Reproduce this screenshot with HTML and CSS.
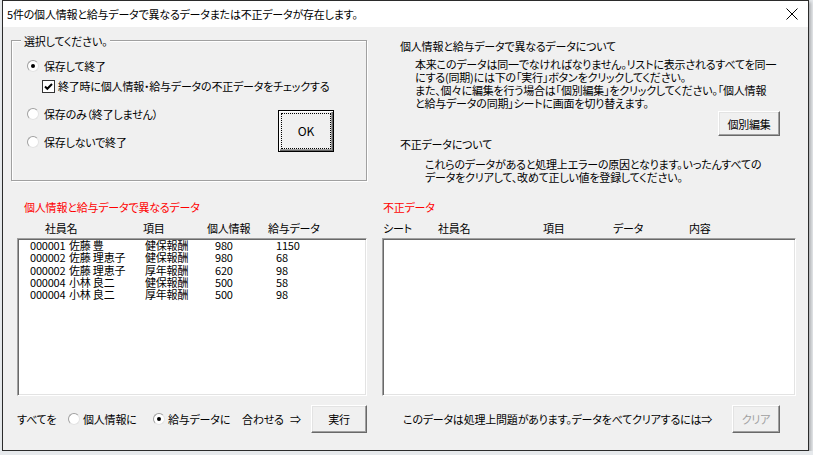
FILE: index.html
```html
<!DOCTYPE html>
<html lang="ja">
<head>
  <meta charset="UTF-8">
  <title>データチェック</title>
  <link rel="stylesheet" href="styles.css">
</head>
<body>

  <div class="window">
    <div class="titlebar">
      <span class="title">5件の個人情報と給与データで異なるデータまたは不正データが存在します。</span>
      <svg class="close" width="12" height="12" viewBox="0 0 12 12">
        <path d="M0.5 0.5 L11.5 11.5 M11.5 0.5 L0.5 11.5" stroke="#000" stroke-width="1" fill="none"/>
      </svg>
    </div>

    <div class="client">
      <div class="top">
        <div class="frame">
          <span class="frame-label">選択してください。</span>
          <div class="frame-body">
            <div class="options">
              <div class="opt"><span class="radio checked"></span>保存して終了</div>
              <div class="opt sub">
                <svg class="check" width="13" height="13" viewBox="0 0 13 13">
                  <rect x="0.5" y="0.5" width="12" height="12" fill="#fff" stroke="#333"/>
                  <path d="M3 6.5 L5.3 8.8 L10 4" stroke="#000" stroke-width="2" fill="none"/>
                </svg>終了時に個人情報・給与データの不正データをチェックする
              </div>
              <div class="opt gap"><span class="radio"></span>保存のみ（終了しません）</div>
              <div class="opt gap"><span class="radio"></span>保存しないで終了</div>
            </div>
            <button class="btn default"><span>OK</span></button>
          </div>
        </div>

        <div class="info">
          <p class="info-head">個人情報と給与データで異なるデータについて</p>
          <p class="info-text">本来このデータは同一でなければなりません。リストに表示されるすべてを同一<br>にする(同期)には下の「実行」ボタンをクリックしてください。<br>また、個々に編集を行う場合は「個別編集」をクリックしてください。「個人情報<br>と給与データの同期」シートに画面を切り替えます。</p>
          <div class="info-actions">
            <button class="btn edit">個別編集</button>
          </div>
          <p class="info-head next">不正データについて</p>
          <p class="info-text deep">これらのデータがあると処理上エラーの原因となります。いったんすべての<br>データをクリアして、改めて正しい値を登録してください。</p>
        </div>
      </div>

      <div class="panes">
        <div class="pane">
          <div class="pane-title left">個人情報と給与データで異なるデータ</div>
          <div class="cols diff-cols">
            <span>社員名</span><span>項目</span><span>個人情報</span><span>給与データ</span>
          </div>
          <div class="listbox">
            <div class="row diff-row"><span>000001</span><span>佐藤 豊</span><span>健保報酬</span><span>980</span><span>1150</span></div>
            <div class="row diff-row"><span>000002</span><span>佐藤 理恵子</span><span>健保報酬</span><span>980</span><span>68</span></div>
            <div class="row diff-row"><span>000002</span><span>佐藤 理恵子</span><span>厚年報酬</span><span>620</span><span>98</span></div>
            <div class="row diff-row"><span>000004</span><span>小林 良二</span><span>健保報酬</span><span>500</span><span>58</span></div>
            <div class="row diff-row"><span>000004</span><span>小林 良二</span><span>厚年報酬</span><span>500</span><span>98</span></div>
          </div>
          <div class="pane-foot sync-foot">
            <span>すべてを</span>
            <span class="choice"><span class="radio"></span>個人情報に</span>
            <span class="choice"><span class="radio checked"></span>給与データに</span>
            <span>合わせる</span>
            <span>⇒</span>
            <button class="btn run">実行</button>
          </div>
        </div>

        <div class="pane">
          <div class="pane-title right">不正データ</div>
          <div class="cols bad-cols">
            <span>シート</span><span>社員名</span><span>項目</span><span>データ</span><span>内容</span>
          </div>
          <div class="listbox"></div>
          <div class="pane-foot clear-foot">
            <span>このデータは処理上問題があります。データをべてクリアするには⇒</span>
            <button class="btn clear" disabled>クリア</button>
          </div>
        </div>
      </div>
    </div>
  </div>

</body>
</html>
```

FILE: styles.css
```css
body {
  margin: 0;
  background: #e6e9ec;
  font-family: "Noto Sans CJK JP", "Noto Sans", sans-serif;
  font-size: 11px;
  letter-spacing: -0.2px;
  font-feature-settings: "palt";
  color: #000;
}

.window {
  box-sizing: border-box;
  width: 807px;
  height: 451px;
  margin-left: 2px;
  border: 1px solid #2b2b2b;
  background: #f0f0f0;
  box-shadow: 2px 2px 3px rgba(0, 0, 0, 0.25);
}

.titlebar {
  height: 26px;
  background: #fff;
  display: flex;
  align-items: center;
  justify-content: space-between;
  padding: 0 10px 0 4px;
  line-height: 14px;
}

.client {
  padding-top: 13px;
}

.top {
  display: flex;
  height: 150px;
}

/* option frame */
.frame {
  position: relative;
  box-sizing: border-box;
  width: 356px;
  height: 141px;
  margin-left: 8px;
  border: 1px solid #a0a0a0;
  box-shadow: inset 1px 1px 0 #fff, 1px 1px 0 #fff;
  flex-shrink: 0;
}

.frame-label {
  position: absolute;
  top: -7px;
  left: 9px;
  padding: 0 3px;
  background: #f0f0f0;
  line-height: 14px;
}

.frame-body {
  display: flex;
  align-items: flex-end;
  padding: 15px 32px 0 15px;
}

.options {
  flex: 1;
  min-width: 0;
}

.opt {
  display: flex;
  align-items: center;
  height: 20px;
  line-height: 14px;
  white-space: nowrap;
}

.opt.sub {
  padding-left: 15px;
}

.opt.gap {
  margin-top: 8px;
}

.radio {
  position: relative;
  box-sizing: border-box;
  width: 12px;
  height: 12px;
  margin-right: 5px;
  border-radius: 50%;
  background: #fff;
  border: 1px solid;
  border-color: #a0a0a0 #e3e3e3 #e3e3e3 #a0a0a0;
  flex-shrink: 0;
}

.radio.checked::after {
  content: "";
  position: absolute;
  left: 3px;
  top: 3px;
  width: 4px;
  height: 4px;
  border-radius: 50%;
  background: #000;
}

.check {
  margin-right: 3px;
  flex-shrink: 0;
}

/* buttons */
.btn {
  box-sizing: border-box;
  font: inherit;
  letter-spacing: inherit;
  font-feature-settings: "palt";
  color: #000;
  background: #f0f0f0;
  border: 1px solid;
  border-color: #fff #696969 #696969 #fff;
  box-shadow: inset -1px -1px 0 #a0a0a0, inset 1px 1px 0 #e3e3e3;
  padding: 0;
  line-height: 14px;
  flex-shrink: 0;
}

.btn.default {
  width: 56px;
  height: 42px;
  margin-left: auto;
  padding: 2px;
  border: 1px solid #000;
  box-shadow: inset 1px 1px 0 #fff, inset -1px -1px 0 #696969, inset -2px -2px 0 #a0a0a0;
  display: flex;
  font-size: 12px;
}

.btn.default span {
  flex: 1;
  display: flex;
  align-items: center;
  justify-content: center;
  border: 1px dotted #000;
}

.btn.edit {
  width: 62px;
  height: 25px;
}

.btn.run {
  width: 56px;
  height: 28px;
}

.btn.clear {
  width: 48px;
  height: 28px;
  color: #a0a0a0;
}

/* info text */
.info {
  margin-left: 33px;
  width: 380px;
}

.info-head {
  margin: 0;
  line-height: 12px;
  white-space: nowrap;
}

.info-head.next {
  margin-top: 2px;
}

.info-text {
  margin: 6px 0 0 15px;
  line-height: 13px;
  white-space: nowrap;
}

.info-text.deep {
  margin: 8px 0 0 25px;
}

.info-actions {
  display: flex;
  justify-content: flex-end;
  margin-top: 1px;
}

/* lists */
.panes {
  display: grid;
  grid-template-columns: 350px 414px;
  column-gap: 15px;
  margin: 10px 0 0 14px;
}

.pane-title {
  color: #ff0000;
  line-height: 14px;
}

.pane-title.left {
  padding-left: 7px;
}

.pane-title.right {
  padding-left: 1px;
}

.cols {
  display: grid;
  margin-top: 7px;
  line-height: 14px;
  white-space: nowrap;
}

.diff-cols {
  grid-template-columns: 98px 64px 61px auto;
  padding-left: 28px;
}

.bad-cols {
  grid-template-columns: 55px 105px 70px 76px auto;
  padding-left: 1px;
}

.listbox {
  box-sizing: border-box;
  height: 158px;
  margin-top: 3px;
  background: #fff;
  border: 1px solid;
  border-color: #a0a0a0 #fff #fff #a0a0a0;
  box-shadow: inset 1px 1px 0 #696969, inset -1px -1px 0 #e3e3e3;
}

.row {
  display: grid;
  line-height: 12.3px;
  white-space: nowrap;
}

.diff-row {
  grid-template-columns: 39px 76px 70px 61px auto;
  padding-left: 12px;
}

.pane-foot {
  height: 28px;
  margin-top: 9px;
  align-items: center;
  white-space: nowrap;
}

.sync-foot {
  display: grid;
  grid-template-columns: 51px 85px 89px 48px 21px 56px;
}

.choice {
  display: flex;
  align-items: center;
}

.choice .radio {
  margin-right: 3px;
}

.clear-foot {
  display: flex;
  justify-content: space-between;
  padding: 0 16px 0 21px;
}
```
